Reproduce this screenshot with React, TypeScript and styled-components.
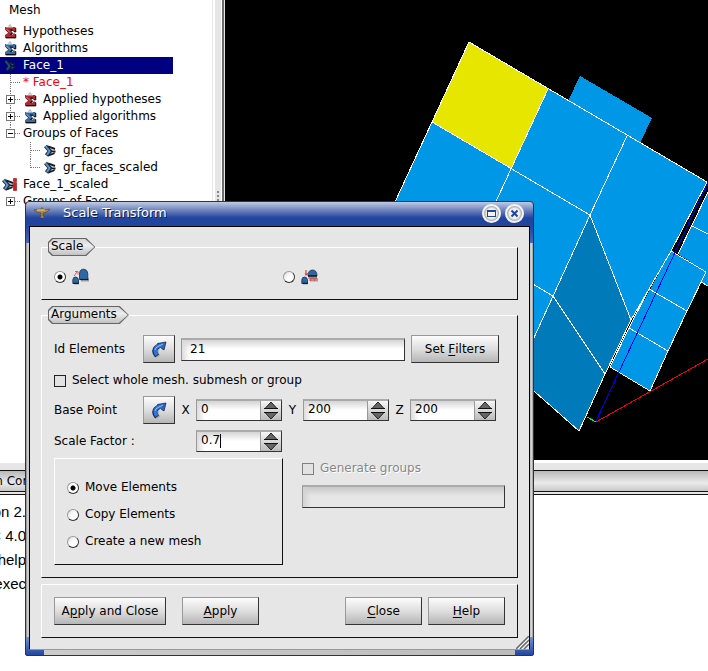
import React from "react";
import styled, { createGlobalStyle } from "styled-components";

const Global = createGlobalStyle`
  * { box-sizing: border-box; }
  html, body { margin: 0; height: 100%; background: #fff; }
  body { font-family: "DejaVu Sans", sans-serif; font-size: 12px; line-height: 17px; color: #000; }
  #root { min-height: 100%; }
`;

const Desktop = styled.main`
  position: relative;
  display: flex;
  flex-direction: column;
  min-height: 100vh;
  overflow: hidden;
`;

const Workspace = styled.div`
  display: flex;
  height: 460px;
`;

const TreePanel = styled.nav`
  width: 212px;
  flex: none;
  background: #fff;
  overflow: hidden;
`;

const Splitter = styled.div`
  display: flex;
  align-items: center;
  justify-content: center;
  flex: none;
  width: 13px;
  padding: 0 1px 66px 0;
  background: linear-gradient(90deg, #e6e6e6 1px, #fff 1px 3px, #e6e6e6 3px 9px, #fff 9px 10px, #6c6c6c 10px 12px, #e6e6e6 12px);
`;

const Grip = styled.span`
  width: 2px;
  height: 12px;
  background: repeating-linear-gradient(#888 0 2px, transparent 2px 4px);
`;

const Viewport = styled.div`
  flex: 1;
  min-width: 0;
  background: #000;
  svg { display: block; width: 100%; height: 100%; }
`;

const Row = styled.div<{ $selected?: boolean; $root?: boolean; $color?: string }>`
  display: flex;
  align-items: center;
  height: ${(p) => (p.$root ? 23 : 17)}px;
  width: ${(p) => (p.$selected ? "173px" : "auto")};
  padding: ${(p) => (p.$root ? "0 0 3px 6px" : "0")};
  background: ${(p) => (p.$selected ? "#000080" : "transparent")};
  color: ${(p) => p.$color ?? (p.$selected ? "#fff" : "#000")};
  white-space: nowrap;
  svg { display: block; flex: none; }
`;

const RowText = styled.span`
  padding-left: 3px;
`;

const DockBar = styled.div`
  flex: none;
  border-top: 3px solid #fff;
  border-bottom: 1px solid #111;
  height: 11px;
  background: #e6e6e6;
`;

const DockTitle = styled.h2`
  flex: none;
  height: 24px;
  margin: 0;
  font-size: 12px;
  font-weight: 400;
  line-height: 20px;
  background: linear-gradient(#b8b8b8, #ebebeb 12px, #c8c8c8 20px, #111 20px 21px, #e6e6e6 21px 23px, #111 23px);
`;

const DockLabel = styled.span`
  display: flex;
  justify-content: flex-end;
  width: 30px;
  white-space: nowrap;
`;

const Console = styled.div`
  flex: 1;
  display: flex;
  flex-direction: column;
  align-items: flex-end;
  width: 26px;
  padding-top: 5px;
  font: 15px/24px "Liberation Sans", sans-serif;
  white-space: nowrap;
`;

const Dialog = styled.section`
  position: absolute;
  left: 25px;
  top: 201px;
  width: 509px;
  padding: 0 3px 5px;
  border: 1px solid #333;
  border-radius: 4px 4px 2px 2px;
  background:
    linear-gradient(#6f95d6, #22469f) left bottom / 18px 18px no-repeat,
    linear-gradient(#6f95d6, #22469f) right bottom / 18px 18px no-repeat,
    linear-gradient(#c0cbe4, #6f85bf 8px, #21449c 16px, #2145a0 24px, #4a68b2 41px, transparent 41px) top / 100% 42px no-repeat,
    linear-gradient(90deg, #888, #ddd 2px, #999 4px, #ccc 5px, #bbb 504px, #ddd 506px, #777);
`;

const TitleBar = styled.header`
  display: flex;
  align-items: center;
  gap: 4px;
  height: 24px;
  padding: 0 6px 2px 5px;
`;

const Title = styled.h1`
  flex: 1;
  margin: 0;
  padding-left: 9px;
  font-size: 13px;
  font-weight: 400;
  line-height: 22px;
  color: #fff;
  text-shadow: 1px 1px #0a1d50;
`;

const WindowButton = styled.button`
  width: 19px;
  height: 19px;
  padding: 0;
  border: 2px solid #f4f4f4;
  border-radius: 50%;
  background: radial-gradient(circle, #f2f2f2 5px, #b0b0b0 7px);
  svg { display: block; margin: auto; }
`;

const Body = styled.form`
  position: relative;
  display: flex;
  flex-direction: column;
  gap: 6px;
  padding: 11px;
  border: 1px solid #000;
  border-bottom: 1px solid #999;
  background: #e6e6e6;
`;

const Group = styled.fieldset`
  min-width: 0;
  margin: 0;
  padding: 0 12px 11px;
  border: 1px solid;
  border-color: #fff #111 #111 #fff;
`;

const Tag = styled.legend`
  position: relative;
  height: 18px;
  margin-left: -6px;
  padding: 0 12px 0 3px;
  line-height: 16px;
  background: #666;
  clip-path: polygon(4px 0, calc(100% - 9px) 0, 100% 50%, calc(100% - 9px) 100%, 4px 100%, 0 calc(100% - 4px), 0 4px);
  &::before {
    content: "";
    position: absolute;
    inset: 1px;
    background: linear-gradient(#d4d4d4, #eee 40%, #c2c2c2);
    clip-path: polygon(4px 0, calc(100% - 9px) 0, 100% 50%, calc(100% - 9px) 100%, 4px 100%, 0 calc(100% - 4px), 0 4px);
  }
  span { position: relative; }
`;

const ScaleModes = styled.div`
  display: grid;
  grid-template-columns: 1fr 1fr;
  gap: 7px;
  padding: 12px 0 3px;
`;

const Choice = styled.label<{ $disabled?: boolean }>`
  display: flex;
  align-items: center;
  gap: 6px;
  height: 17px;
  color: ${(p) => (p.$disabled ? "#888" : "#000")};
  text-shadow: ${(p) => (p.$disabled ? "1px 1px #fff" : "none")};
  svg { display: block; }
`;

const Radio = styled.input.attrs({ type: "radio" })`
  appearance: none;
  flex: none;
  width: 12px;
  height: 12px;
  margin: 0;
  border: 1px solid;
  border-color: #999 #333 #333 #999;
  border-radius: 50%;
  background: linear-gradient(135deg, #ddd, #fff 50%);
  &:checked { background: radial-gradient(circle, #000 2px, #fff 3px); }
`;

const Check = styled.input.attrs({ type: "checkbox" })`
  appearance: none;
  flex: none;
  width: 12px;
  height: 12px;
  margin: 0;
  border: 1px solid #222;
  background: #e2e2e2;
  &:disabled { border-color: #808080; }
`;

const FieldRow = styled.div`
  display: flex;
  align-items: center;
`;

const Caption = styled.label`
  width: 89px;
  flex: none;
`;

const Axis = styled.label`
  width: 21px;
  flex: none;
  text-align: center;
`;

const sunken = `
  border: 1px solid;
  border-color: #999 #333 #333 #999;
  border-top-width: 2px;
  border-top-color: #aaa;
`;

const TextBox = styled.input.attrs({ type: "text" })`
  ${sunken}
  flex: 1;
  min-width: 0;
  width: 100%;
  height: 23px;
  margin: 0 6px;
  padding: 0 8px 2px;
  font: inherit;
  background: linear-gradient(90deg, #dcdcdc, transparent 8px), linear-gradient(#d4d4d4, #fff 9px);
`;

const NameBox = styled(TextBox)`
  flex: none;
  margin: 0;
  background: linear-gradient(90deg, #d2d2d2, transparent 8px), linear-gradient(#c8c8c8, #e6e6e6 9px);
`;

const PushButton = styled.button<{ $width: number }>`
  flex: none;
  display: flex;
  align-items: center;
  justify-content: center;
  width: ${(p) => p.$width}px;
  height: 28px;
  padding: 0;
  border: 1px solid;
  border-color: #999 #333 #333 #999;
  font: inherit;
  color: #000;
  white-space: pre;
  background: linear-gradient(#fcfcfc, #dedede 50%, #b6b6b6);
  u { text-underline-offset: 2px; }
`;

const SpinFrame = styled.span`
  ${sunken}
  position: relative;
  display: flex;
  flex: none;
  width: 86px;
  height: 22px;
  input {
    flex: 1;
    min-width: 0;
    padding: 0 4px 2px;
    border: 0;
    outline: 0;
    font: inherit;
    background: linear-gradient(90deg, #dcdcdc, transparent 8px), linear-gradient(#d4d4d4, #fff 9px);
  }
`;

const Caret = styled.i`
  position: absolute;
  left: 23px;
  top: 2px;
  width: 1px;
  height: 14px;
  background: #000;
`;

const SpinArrows = styled.span`
  width: 21px;
  border-left: 1px solid #999;
  background: linear-gradient(#f6f6f6, #bbb);
  svg { display: block; margin: 0 auto; }
`;

const Arguments = styled.div`
  display: flex;
  flex-direction: column;
  padding: 11px 0 1px;
`;

const ElementsRow = styled(FieldRow)`
  padding-right: 6px;
`;

const CheckRow = styled.div`
  padding: 9px 0 7px;
`;

const FactorRow = styled(FieldRow)`
  padding: 6px 0;
`;

const FactorCaption = styled(Caption)`
  width: 142px;
`;

const Lower = styled.div`
  display: grid;
  grid-template-columns: 229px 1fr;
  gap: 19px;
`;

const Targets = styled.div`
  display: flex;
  flex-direction: column;
  gap: 10px;
  padding: 20px 12px 14px;
  border: 1px solid;
  border-color: #fff #111 #111 #fff;
`;

const GroupNaming = styled.div`
  display: flex;
  flex-direction: column;
  gap: 8px;
  padding: 2px 0;
`;

const Actions = styled.div`
  display: flex;
  gap: 6px;
  padding: 12px;
  border: 1px solid;
  border-color: #fff #111 #111 #fff;
`;

const Leading = styled.div`
  display: flex;
  flex: 1;
  gap: 16px;
`;

const SizeGrip = styled.svg`
  position: absolute;
  right: 0;
  bottom: 0;
`;

const SIGMA = "M5 4h10v4h-1.500l-1-1.500H9.500L12 9.500 9.500 12h3l1-1.500H15V14H5v-2l3.500-2.500L5 6z";

const Sigma = ({ color, light }: { color: string; light: string }) => (
  <svg width="20" height="17" viewBox="0 0 20 17" aria-hidden="true">
    <path d="M9 4V2.500Q10 1 11 2.500V4" fill="none" stroke="#aaa" />
    <path d={SIGMA} transform="translate(.8 1)" fill="#101014" stroke="#101014" strokeWidth=".8" />
    <path d={SIGMA} fill={color} />
    <path d="M6 4.500h7M6.500 6l3.500 3.500" stroke={light} strokeWidth=".8" />
  </svg>
);

const MeshIcon = ({ dark, flag }: { dark?: boolean; flag?: boolean }) => (
  <svg width="20" height="17" viewBox="0 0 20 17" aria-hidden="true">
    <g transform={flag ? "translate(-2 0)" : undefined} fill="none">
      <path d="M8 4.500L15 7M9 9.500h6.500M8 13.500l6.500-2.500" stroke={dark ? "#0a1640" : "#151b22"} strokeWidth="2" />
      <path d="M9.500 6.500l4 1.500M10.500 11l3-.5" stroke={dark ? "#35588d" : "#c9d3dc"} />
      <path d="M5.500 4L10 9l-3.500 4.500" stroke={dark ? "#0a1640" : "#1d2a3a"} strokeWidth="4" />
      <path d="M5.500 4L9.500 9l-2.500 4" stroke={dark ? "#24477c" : "#5f92c6"} strokeWidth="2" />
    </g>
    {flag && <path d="M13.500 2.500h3v3h-3zM13.500 6.500h3v8h-3z" fill="#e01818" stroke="#801010" strokeWidth=".6" />}
  </svg>
);

type GuideKind = "tee" | "end" | "plus" | "minus" | "last" | "blank";

const Guide = ({ kind }: { kind: GuideKind }) => (
  <svg width="20" height="17" viewBox="0 0 20 17" shapeRendering="crispEdges" aria-hidden="true">
    {kind !== "blank" && (
      <path
        d={kind === "tee" || kind === "plus" ? "M10.500 0V17M11 8.500H20" : kind === "last" ? "M15 8.500H20" : "M10.500 0V9M11 8.500H20"}
        stroke="#777"
        strokeDasharray="1 1"
        fill="none"
      />
    )}
    {(kind === "plus" || kind === "minus" || kind === "last") && (
      <>
        <rect x="6.500" y="4.500" width="8" height="8" fill="#fff" stroke="#777" />
        <path d={kind === "minus" ? "M8 8.500h5" : "M8 8.500h5M10.500 6v5"} stroke="#000" />
      </>
    )}
  </svg>
);

const ScaleIcon = ({ partial }: { partial?: boolean }) => (
  <svg width="18" height="18" viewBox="0 0 18 18" aria-hidden="true">
    <path d="M2 16.500V14h5v2.500zM9 13.500V10h8v3.500z" fill="#777" opacity=".6" />
    <path d="M.8 15.500V12Q1 9 3.500 9T6.500 12v3.500z" fill="#2c69a4" stroke="#15304e" strokeWidth=".8" />
    <path d="M1.500 15.300h5.200" stroke="#0c1a2a" strokeWidth="1.200" />
    {partial ? (
      <>
        <path d="M7 8q0-6 4.500-6T16 8z" fill="#2c69a4" stroke="#15304e" strokeWidth=".8" />
        <path d="M7 8h9" stroke="#0c1a2a" strokeWidth="1.500" />
        <path d="M7.500 10h8.500M8.500 12h2M12.500 12h2" stroke="#d84848" strokeWidth="1.500" />
        <path d="M5 2v5M4 5.500L5 7l2-1.500" stroke="#d84040" fill="none" strokeWidth="1.200" />
      </>
    ) : (
      <>
        <path d="M7.500 11.500V6q0-4.800 4-4.800T15.800 6v5.500z" fill="#2c69a4" stroke="#15304e" strokeWidth=".8" />
        <path d="M8 11.500h8.200" stroke="#0c1a2a" strokeWidth="1.200" />
        <path d="M2 8l3-4M3 3.500h3v3" stroke="#d86060" fill="none" />
      </>
    )}
  </svg>
);

const PickArrow = () => (
  <svg width="16" height="18" viewBox="0 0 16 18" aria-hidden="true">
    <path d="M7.500 16.500Q4 12 7 9" fill="none" stroke="#888" strokeWidth="4" opacity=".5" />
    <path d="M6 16Q2 11 5 8T10 6" fill="none" stroke="#1a2c4c" strokeWidth="5" />
    <path d="M6.500 3.500L15 2l-2 8-2.500-1.500z" fill="#2b65c0" stroke="#1a2c4c" strokeWidth=".8" />
    <path d="M6 15Q2.800 11 5 8T11 5.500" fill="none" stroke="#2f72dc" strokeWidth="3.500" />
    <path d="M4 10Q4.500 7.500 7 6.500L12 4" fill="none" stroke="#8dbcf4" />
  </svg>
);

const Spin = ({ id, value, caret }: { id: string; value: string; caret?: boolean }) => (
  <SpinFrame>
    <input id={id} type="text" inputMode="decimal" defaultValue={value} />
    {caret && <Caret />}
    <SpinArrows>
      <svg width="14" height="19" viewBox="0 0 14 19" aria-hidden="true">
        <path d="M1 7.500L7 1l6 6.500zM1 11.500h12L7 18z" fill="#666" stroke="#222" />
        <path d="M0 7.500h14M0 11.500h14" stroke="#111" />
      </svg>
    </SpinArrows>
  </SpinFrame>
);

const Scene = () => (
  <svg viewBox="225 0 483 460" preserveAspectRatio="xMinYMin slice" shapeRendering="crispEdges" role="img" aria-label="Mesh view">
    <path d="M580 76L652 118L640 143L568 101Z" fill="#0098e6" />
    <path d="M469 42L707 182L671 251L631 320L590 215L517 375L358 282Z" fill="#0098e6" />
    <path d="M590 215L631 320L605 374L579 431L517 376Z" fill="#007ab8" />
    <path d="M671 251L706 272L687 311L668 351L650 391L610 367L629 328Z" fill="#0098e6" />
    <path d="M708 192V286L701 282L706 272L678 254Z" fill="#0098e6" />
    <path d="M469 42L548 89L511 169L432 122Z" fill="#e6e600" />
    <g fill="none" stroke="#fff">
      <path d="M395 202L469 42L707 182L671 251L631 320L605 374L579 431L517 376" />
      <path d="M432 122L590 215L631 320M548 89L474 249M627 136L590 215L517 375M474 249L553 296L605 374" />
      <path d="M708 192L678 254M671 251L706 272L687 311L668 351L650 391L610 367L629 328L649 289Z" />
      <path d="M649 289L687 311M629 328L668 351M692 226L708 234M708 286L701 282L706 272" />
    </g>
    <path d="M708 182L596 421" stroke="#0000f0" />
    <path d="M596 422L708 359" stroke="#f00" />
    <path d="M587 417L596 422" stroke="#0f0" />
  </svg>
);

export default function App() {
  return (
    <>
      <Global />
      <Desktop>
        <Workspace>
          <TreePanel aria-label="Object browser">
            <Row $root><RowText>Mesh</RowText></Row>
            <Row><Sigma color="#b02a30" light="#e58a8a" /><RowText>Hypotheses</RowText></Row>
            <Row><Sigma color="#3f6a9a" light="#9cc0e4" /><RowText>Algorithms</RowText></Row>
            <Row $selected><MeshIcon dark /><RowText>Face_1</RowText></Row>
            <Row $color="#f00"><Guide kind="tee" /><RowText>* Face_1</RowText></Row>
            <Row><Guide kind="plus" /><Sigma color="#b02a30" light="#e58a8a" /><RowText>Applied hypotheses</RowText></Row>
            <Row><Guide kind="plus" /><Sigma color="#3f6a9a" light="#9cc0e4" /><RowText>Applied algorithms</RowText></Row>
            <Row><Guide kind="minus" /><RowText>Groups of Faces</RowText></Row>
            <Row><Guide kind="blank" /><Guide kind="tee" /><MeshIcon /><RowText>gr_faces</RowText></Row>
            <Row><Guide kind="blank" /><Guide kind="end" /><MeshIcon /><RowText>gr_faces_scaled</RowText></Row>
            <Row><MeshIcon flag /><RowText>Face_1_scaled</RowText></Row>
            <Row><Guide kind="last" /><RowText>Groups of Faces</RowText></Row>
          </TreePanel>
          <Splitter><Grip /></Splitter>
          <Viewport><Scene /></Viewport>
        </Workspace>
        <DockBar />
        <DockTitle><DockLabel>n Con</DockLabel></DockTitle>
        <Console>
          <span>on 2.</span>
          <span>C 4.0</span>
          <span>help</span>
          <span>exec</span>
        </Console>

        <Dialog role="dialog" aria-labelledby="title">
          <TitleBar>
            <svg width="16" height="12" viewBox="0 0 16 12" aria-hidden="true">
              <path d="M0 3l5-1 2 1V1h2v2l7-1-3 3-4 1v3l2 2H6l1-2V6L3 5z" fill="#b98a35" stroke="#423820" strokeWidth=".5" />
              <path d="M3 3h8" stroke="#ecd79c" />
            </svg>
            <Title id="title">Scale Transform</Title>
            <WindowButton type="button" aria-label="Maximize">
              <svg width="9" height="9" viewBox="0 0 9 9" shapeRendering="crispEdges"><path d="M.5 1.500h8v6h-8zM.5 2.500h8" fill="none" stroke="#22449c" /></svg>
            </WindowButton>
            <WindowButton type="button" aria-label="Close window">
              <svg width="9" height="9" viewBox="0 0 9 9"><path d="M1.500 1.500l6 6m0-6l-6 6" stroke="#22449c" strokeWidth="2" /></svg>
            </WindowButton>
          </TitleBar>
          <Body onSubmit={(e) => e.preventDefault()}>
            <Group>
              <Tag><span>Scale</span></Tag>
              <ScaleModes>
                <Choice><Radio name="mode" defaultChecked aria-label="Uniform scale" /><ScaleIcon /></Choice>
                <Choice><Radio name="mode" aria-label="Scale per axis" /><ScaleIcon partial /></Choice>
              </ScaleModes>
            </Group>
            <Group>
              <Tag><span>Arguments</span></Tag>
              <Arguments>
                <ElementsRow>
                  <Caption htmlFor="ids">Id Elements</Caption>
                  <PushButton type="button" $width={32} aria-label="Pick elements"><PickArrow /></PushButton>
                  <TextBox id="ids" defaultValue="21" />
                  <PushButton type="button" $width={88}>Set <u>F</u>ilters</PushButton>
                </ElementsRow>
                <CheckRow><Choice><Check />Select whole mesh. submesh or group</Choice></CheckRow>
                <FieldRow>
                  <Caption as="span">Base Point</Caption>
                  <PushButton type="button" $width={32} aria-label="Pick base point"><PickArrow /></PushButton>
                  <Axis htmlFor="x">X</Axis><Spin id="x" value="0" />
                  <Axis htmlFor="y">Y</Axis><Spin id="y" value="200" />
                  <Axis htmlFor="z">Z</Axis><Spin id="z" value="200" />
                </FieldRow>
                <FactorRow>
                  <FactorCaption htmlFor="factor">Scale Factor :</FactorCaption>
                  <Spin id="factor" value="0.7" caret />
                </FactorRow>
                <Lower>
                  <Targets>
                    <Choice><Radio name="target" defaultChecked />Move Elements</Choice>
                    <Choice><Radio name="target" />Copy Elements</Choice>
                    <Choice><Radio name="target" />Create a new mesh</Choice>
                  </Targets>
                  <GroupNaming>
                    <Choice $disabled><Check disabled />Generate groups</Choice>
                    <NameBox disabled aria-label="Group name" />
                  </GroupNaming>
                </Lower>
              </Arguments>
            </Group>
            <Actions>
              <Leading>
                <PushButton type="button" $width={112}>A<u>p</u>ply and Close</PushButton>
                <PushButton type="button" $width={77}><u>A</u>pply</PushButton>
              </Leading>
              <PushButton type="button" $width={77}><u>C</u>lose</PushButton>
              <PushButton type="button" $width={77}><u>H</u>elp</PushButton>
            </Actions>
            <SizeGrip width="13" height="13" viewBox="0 0 13 13" aria-hidden="true">
              <path d="M0 13L13 0M4 13l9-9M8 13l5-5" stroke="#666" strokeWidth="1.500" />
              <path d="M2 13L13 2M6 13l7-7" stroke="#fff" />
            </SizeGrip>
          </Body>
        </Dialog>
      </Desktop>
    </>
  );
}
